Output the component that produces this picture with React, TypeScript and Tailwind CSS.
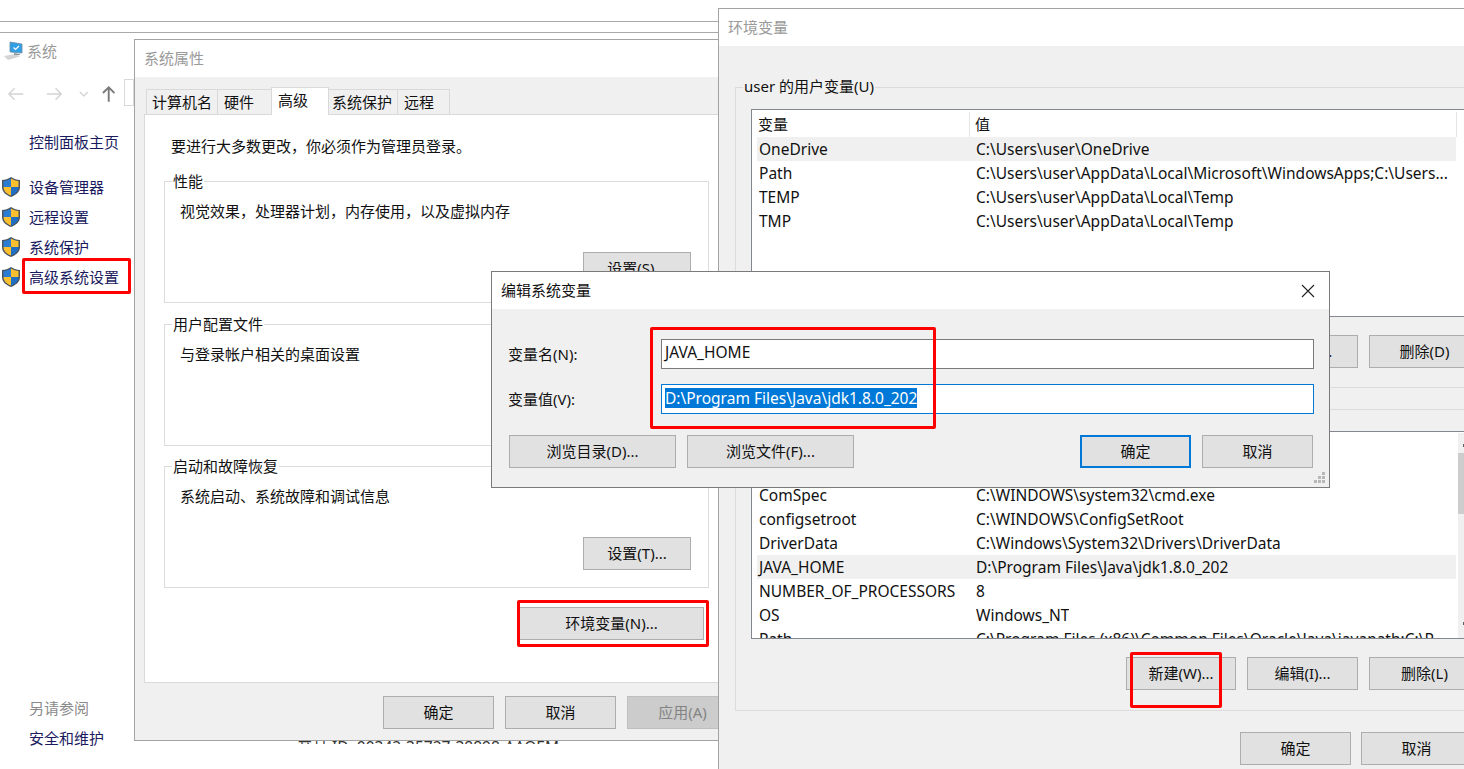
const FONT = "font-['Noto_Sans','Noto_Sans_CJK_SC',sans-serif]";

function WinButton({ label, className = '', disabled = false, primary = false }: { label: string; className?: string; disabled?: boolean; primary?: boolean }) {
  return (
    <div
      className={`h-[33px] flex items-center justify-center shrink-0 text-[15px] ${
        primary ? 'border-2 border-[#0078d7] bg-[#e1e1e1]' : disabled ? 'border border-[#bfbfbf] bg-[#cccccc] text-[#838383]' : 'border border-[#adadad] bg-[#e1e1e1]'
      } ${className}`}
    >
      {label}
    </div>
  );
}

function Shield() {
  return (
    <svg width="20" height="22" viewBox="0 0 20 22" className="shrink-0">
      <path d="M10 1 C7 3 4 4 1 4 L1 11 C1 16 5 19 10 21 C15 19 19 16 19 11 L19 4 C16 4 13 3 10 1 Z" fill="#4a5560" />
      <path d="M10 2.5 C7.5 4 5 5 2.5 5 L2.5 11 L10 11 Z" fill="#2b7cd3" />
      <path d="M10 2.5 C12.5 4 15 5 17.5 5 L17.5 11 L10 11 Z" fill="#fcc02e" />
      <path d="M2.5 11 L10 11 L10 19.5 C6 18 2.5 15.5 2.5 11 Z" fill="#fcc02e" />
      <path d="M17.5 11 L10 11 L10 19.5 C14 18 17.5 15.5 17.5 11 Z" fill="#1f6fc4" />
    </svg>
  );
}

function Group({ title, className = '', children }: { title: string; className?: string; children?: React.ReactNode }) {
  return (
    <div className={`relative border border-[#dcdcdc] ${className}`}>
      <span className="absolute left-[7px] -top-[11px] px-[1px] leading-[20px] bg-inherit">{title}</span>
      {children}
    </div>
  );
}

function ListRow({ name, value, selected = false }: { name: string; value: string; selected?: boolean }) {
  return (
    <div className={`flex h-6 items-center shrink-0 whitespace-nowrap ml-[5px] w-[699px] pt-[2px] text-[15.5px] ${selected ? 'bg-[#f0f0f0]' : ''}`}>
      <span className="w-[219px] pl-[2px] shrink-0">{name}</span>
      <span className="overflow-hidden">{value}</span>
    </div>
  );
}

const USER_VARS = [
  ['OneDrive', 'C:\\Users\\user\\OneDrive'],
  ['Path', 'C:\\Users\\user\\AppData\\Local\\Microsoft\\WindowsApps;C:\\Users...'],
  ['TEMP', 'C:\\Users\\user\\AppData\\Local\\Temp'],
  ['TMP', 'C:\\Users\\user\\AppData\\Local\\Temp'],
];

const SYS_VARS = [
  ['ComSpec', 'C:\\WINDOWS\\system32\\cmd.exe'],
  ['configsetroot', 'C:\\WINDOWS\\ConfigSetRoot'],
  ['DriverData', 'C:\\Windows\\System32\\Drivers\\DriverData'],
  ['JAVA_HOME', 'D:\\Program Files\\Java\\jdk1.8.0_202'],
  ['NUMBER_OF_PROCESSORS', '8'],
  ['OS', 'Windows_NT'],
  ['Path', 'C:\\Program Files (x86)\\Common Files\\Oracle\\Java\\javapath;C:\\P...'],
];

const NAV_ITEMS = ['设备管理器', '远程设置', '系统保护', '高级系统设置'];

const TABS = [
  { label: '计算机名', width: 'w-[72px] pl-[5px]' },
  { label: '硬件', width: 'w-[55px] pl-[6px]' },
  { label: '高级', width: 'w-[58px] pl-[6px]', active: true },
  { label: '系统保护', width: 'w-[70px] pl-[3px]' },
  { label: '远程', width: 'w-[53px] pl-[6px]' },
];

function Sidebar() {
  return (
    <div className="absolute left-0 top-0 w-[134px] h-[769px] overflow-hidden">
      <div className="h-[33px]" />
      <div className="flex items-center mt-[7px] h-[22px] pl-[2px] gap-[3px]">
        <svg width="22" height="20" viewBox="0 0 22 20">
          <path d="M2 15 L14 13 L18 15.5 L6 19 Z" fill="#d4d4d4" />
          <path d="M8 1 L20 3 L20 12 L8 11 Z" fill="#2f9fe6" stroke="#6f8ea3" strokeWidth="0.8" />
          <path d="M11.5 6.5 L13.5 8.5 L17 5" stroke="#fff" strokeWidth="1.2" fill="none" />
          <path d="M12 12 L18 13 L18 14 L12 14 Z" fill="#8a98a3" />
        </svg>
        <span className="text-[#9a9a9a]">系统</span>
      </div>
      <div className="flex items-center h-[28px] mt-[18px]">
        <svg width="20" height="16" viewBox="0 0 20 16" className="ml-[6px]"><path d="M18 8 H3 M9 2 L3 8 L9 14" stroke="#d4d4d4" strokeWidth="1.5" fill="none" /></svg>
        <svg width="20" height="16" viewBox="0 0 20 16" className="ml-[20px]"><path d="M2 8 H17 M11 2 L17 8 L11 14" stroke="#d4d4d4" strokeWidth="1.5" fill="none" /></svg>
        <svg width="12" height="8" viewBox="0 0 12 8" className="ml-[14px]"><path d="M2 2 L6 6 L10 2" stroke="#d4d4d4" strokeWidth="1.5" fill="none" /></svg>
        <svg width="14" height="18" viewBox="0 0 14 18" className="ml-[12px]"><path d="M7 17 V2 M1 8 L7 2 L13 8" stroke="#7a7a7a" strokeWidth="2" fill="none" /></svg>
        <div className="ml-[9px] w-[10px] h-[27px] mb-[3px] border border-[#d9d9d9]" />
      </div>
      <div className="mt-[22px] pl-[29px] leading-[24px] text-[#1a1a5e]">控制面板主页</div>
      <div className="mt-[21px] flex flex-col gap-[6px]">
        {NAV_ITEMS.map((item) => (
          <div key={item} className="flex items-center h-6 pl-[1px] gap-[8px] text-[#1a1a5e]">
            <Shield />
            <span>{item}</span>
          </div>
        ))}
      </div>
      <div className="mt-[407px] pl-[29px] leading-[24px] text-[#8a8a8a]">另请参阅</div>
      <div className="mt-[6px] pl-[29px] leading-[24px] text-[#1a1a5e]">安全和维护</div>
    </div>
  );
}

function SystemProps() {
  return (
    <div className="absolute left-[134px] top-[39px] w-[614px] h-[702px] border border-[#a3a3a3] bg-[#f0f0f0] flex flex-col">
      <div className="h-[37px] bg-white pl-[9px] flex items-center text-[#9a9a9a] shrink-0">系统属性</div>
      <div className="flex h-[27px] mt-[10px] ml-[11px] items-end shrink-0">
        {TABS.map((tab) => (
          <div
            key={tab.label}
            className={`flex items-center border border-[#d9d9d9] border-b-0 -ml-[1px] first:ml-0 ${tab.width} ${
              tab.active ? 'h-[28px] -mb-[1px] bg-white pb-[3px] relative z-10' : 'h-[25px] bg-[#f0f0f0]'
            }`}
          >
            {tab.label}
          </div>
        ))}
      </div>
      <div className="ml-[9px] w-[584px] h-[569px] bg-white border border-[#d9d9d9] pl-[19px] pt-[19px] shrink-0">
        <div className="leading-[24px] pl-[7px]">要进行大多数更改，你必须作为管理员登录。</div>
        <Group title="性能" className="mt-[23px] w-[545px] h-[122px] bg-white">
          <div className="pt-[17px] pl-[15px] leading-[24px]">视觉效果，处理器计划，内存使用，以及虚拟内存</div>
          <WinButton label="设置(S)..." className="absolute right-[17px] top-[70px] w-[108px]" />
        </Group>
        <Group title="用户配置文件" className="mt-[21px] w-[545px] h-[122px] bg-white">
          <div className="pt-[17px] pl-[15px] leading-[24px]">与登录帐户相关的桌面设置</div>
        </Group>
        <Group title="启动和故障恢复" className="mt-[20px] w-[545px] h-[122px] bg-white">
          <div className="pt-[17px] pl-[15px] leading-[24px]">系统启动、系统故障和调试信息</div>
          <WinButton label="设置(T)..." className="absolute right-[17px] top-[70px] w-[108px]" />
        </Group>
        <div className="mt-[19px] ml-[355px]">
          <WinButton label="环境变量(N)..." className="w-[185px]" />
        </div>
      </div>
      <div className="flex mt-[13px] ml-[248px] gap-[11px]">
        <WinButton label="确定" className="w-[111px]" />
        <WinButton label="取消" className="w-[111px]" />
        <WinButton label="应用(A)" className="w-[111px]" disabled />
      </div>
    </div>
  );
}

function EnvVars() {
  return (
    <div className="absolute left-[718px] top-[8px] w-[746px] h-[761px] overflow-hidden border-l border-t border-[#a3a3a3] bg-[#f0f0f0] flex flex-col">
      <div className="h-[37px] bg-white pl-[9px] flex items-center text-[#9a9a9a] shrink-0">环境变量</div>
      <div className="relative mt-[41px] ml-[16px] w-[760px] h-[301px] border border-[#dcdcdc] shrink-0 bg-[#f0f0f0]">
        <span className="absolute left-[7px] -top-[12px] px-[1px] leading-[20px] bg-[#f0f0f0]">user 的用户变量(U)</span>
        <div className="mt-[21px] ml-[15px] w-[730px] h-[208px] bg-white border border-[#828790] overflow-hidden flex flex-col">
          <div className="flex h-[27px] shrink-0 items-center pt-[2px]">
            <span className="w-[218px] pl-[6px] border-r border-[#e5e5e5] h-full flex items-center shrink-0">变量</span>
            <span className="w-[487px] pl-[5px] border-r border-[#e5e5e5] h-full flex items-center shrink-0">值</span>
          </div>
          {USER_VARS.map(([name, value], i) => (
            <ListRow key={name} name={name} value={value} selected={i === 0} />
          ))}
        </div>
        <div className="flex ml-[390px] mt-[18px] gap-[11px]">
          <WinButton label="新建(N)..." className="w-[110px]" />
          <WinButton label="编辑(E)..." className="w-[111px]" />
          <WinButton label="删除(D)" className="w-[111px]" />
        </div>
      </div>
      <div className="relative mt-[21px] ml-[16px] w-[760px] h-[302px] border border-[#dcdcdc] shrink-0 bg-[#f0f0f0]">
        <div className="mt-[21px] ml-[15px] w-[730px] h-[208px] bg-white border border-[#828790] overflow-hidden flex flex-col">
          <div className="h-[51px] shrink-0" />
          {SYS_VARS.map(([name, value], i) => (
            <ListRow key={name + i} name={name} value={value} selected={name === 'JAVA_HOME'} />
          ))}
        </div>
        <div className="flex ml-[390px] mt-[18px] gap-[11px]">
          <WinButton label="新建(W)..." className="w-[110px]" />
          <WinButton label="编辑(I)..." className="w-[111px]" />
          <WinButton label="删除(L)" className="w-[111px]" />
        </div>
      </div>
      <div className="flex ml-[521px] mt-[21px] gap-[10px]">
        <WinButton label="确定" className="w-[111px]" />
        <WinButton label="取消" className="w-[111px]" />
      </div>
      <div className="absolute left-[739px] top-[424px] w-[7px] h-[205px] bg-[#f0f0f0]">
        <div className="mt-[20px] h-[61px] bg-[#cdcdcd]" />
        <div className="absolute right-0 top-[11px] w-[2px] h-[3px] bg-[#606060]" />
        <div className="absolute right-0 bottom-[13px] w-[2px] h-[3px] bg-[#606060]" />
      </div>
    </div>
  );
}

function EditDialog() {
  return (
    <div className="absolute left-[491px] top-[271px] w-[839px] h-[217px] border border-[#7a7a7a] bg-[#f0f0f0] flex flex-col">
      <div className="h-[37px] bg-white shrink-0 flex items-center justify-between pl-[9px] pr-[14px]">
        <span>编辑系统变量</span>
        <svg width="14" height="14" viewBox="0 0 14 14"><path d="M1 1 L13 13 M13 1 L1 13" stroke="#222" strokeWidth="1.1" /></svg>
      </div>
      <div className="flex items-center mt-[30px] pl-[16px]">
        <span className="w-[153px]">变量名(N):</span>
        <div className="w-[653px] h-[30px] border border-[#7a7a7a] bg-white flex items-center pl-[3px] pb-[2px] text-[15.5px]">JAVA_HOME</div>
      </div>
      <div className="flex items-center mt-[15px] pl-[16px]">
        <span className="w-[153px]">变量值(V):</span>
        <div className="w-[653px] h-[30px] border border-[#0078d7] bg-white flex items-center pl-[3px] pb-[3px] text-[15.5px]">
          <span className="bg-[#0078d7] text-white leading-[20px]">D:\Program Files\Java\jdk1.8.0_202</span>
        </div>
      </div>
      <div className="flex mt-[21px] pl-[17px]">
        <WinButton label="浏览目录(D)..." className="w-[167px]" />
        <WinButton label="浏览文件(F)..." className="w-[167px] ml-[11px]" />
        <WinButton label="确定" primary className="w-[111px] ml-[226px]" />
        <WinButton label="取消" className="w-[111px] ml-[11px]" />
      </div>
      <svg width="12" height="12" viewBox="0 0 12 12" className="absolute right-[3px] bottom-[3px]" fill="#b8b8b8">
        <rect x="8" y="0" width="3" height="3" /><rect x="4" y="4" width="3" height="3" /><rect x="8" y="4" width="3" height="3" />
        <rect x="0" y="8" width="3" height="3" /><rect x="4" y="8" width="3" height="3" /><rect x="8" y="8" width="3" height="3" />
      </svg>
    </div>
  );
}

const MARKS = [
  'left-[22px] top-[258px] w-[109px] h-[36px]',
  'left-[517px] top-[600px] w-[192px] h-[47px]',
  'left-[650px] top-[327px] w-[286px] h-[102px]',
  'left-[1130px] top-[652px] w-[92px] h-[56px]',
];

export default function App() {
  return (
    <div className={`relative w-[1464px] h-[769px] overflow-hidden bg-white text-[15px] text-[#111] ${FONT}`}>
      <div className="w-[718px]">
        <div className="h-[22px] border-b border-[#a9a9a9]" />
        <div className="h-[11px] border-b border-[#a9a9a9]" />
      </div>
      <Sidebar />
      {/* text of the window behind, only its top edge shows below 系统属性 */}
      <div className="absolute left-[297px] top-[737px] h-[7px] overflow-hidden whitespace-nowrap text-[15.5px] leading-[20px] text-[#333]">产品 ID: 00342-35727-38898-AAOEM</div>
      <SystemProps />
      <EnvVars />
      <EditDialog />
      {MARKS.map((pos) => (
        <div key={pos} className={`absolute border-[3px] border-[#ff0000] rounded-[2px] ${pos}`} />
      ))}
    </div>
  );
}
